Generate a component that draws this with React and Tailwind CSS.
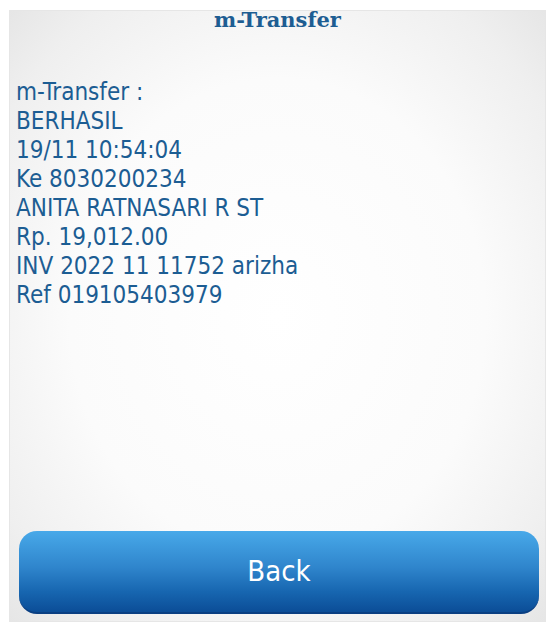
export default function App() {
  const lines = [
    'm-Transfer :',
    'BERHASIL',
    '19/11 10:54:04',
    'Ke 8030200234',
    'ANITA RATNASARI R ST',
    'Rp. 19,012.00',
    'INV 2022 11 11752 arizha',
    'Ref 019105403979',
  ];

  return (
    <div className="h-[630px] w-[554px] bg-white pt-[10px] pl-[9px] pr-[8px] pb-[8px]">
      <div className="flex h-full flex-col border border-[#e6e6e6] bg-[radial-gradient(ellipse_at_center,#ffffff_0%,#fbfbfb_55%,#efefef_85%,#e6e6e6_100%)]">
        {/* header */}
        <div className="-mt-[6px] text-center font-['DejaVu_Serif',serif] text-[21px] font-bold leading-[30px] text-[#1d5d92]">
          m-Transfer
        </div>

        {/* transfer result */}
        <div className="mt-[43px] pl-[6px] font-['DejaVu_Sans_Condensed','DejaVu_Sans',sans-serif] text-[24px] leading-[29px] text-[#1c5d93]">
          {lines.map((line) => (
            <div key={line}>{line}</div>
          ))}
        </div>

        <div className="flex-1" />

        <div className="pl-[9px] pr-[6px] pb-[7px]">
          <button className="flex h-[83px] w-full items-center justify-center rounded-[18px] border-b-2 border-[#0a3f82] bg-[linear-gradient(to_bottom,#48a9e9_0%,#2f85cc_45%,#1766b0_75%,#0b4d97_100%)] font-['DejaVu_Sans_Condensed','DejaVu_Sans',sans-serif] text-[29px] text-white">
            Back
          </button>
        </div>
      </div>
    </div>
  );
}
